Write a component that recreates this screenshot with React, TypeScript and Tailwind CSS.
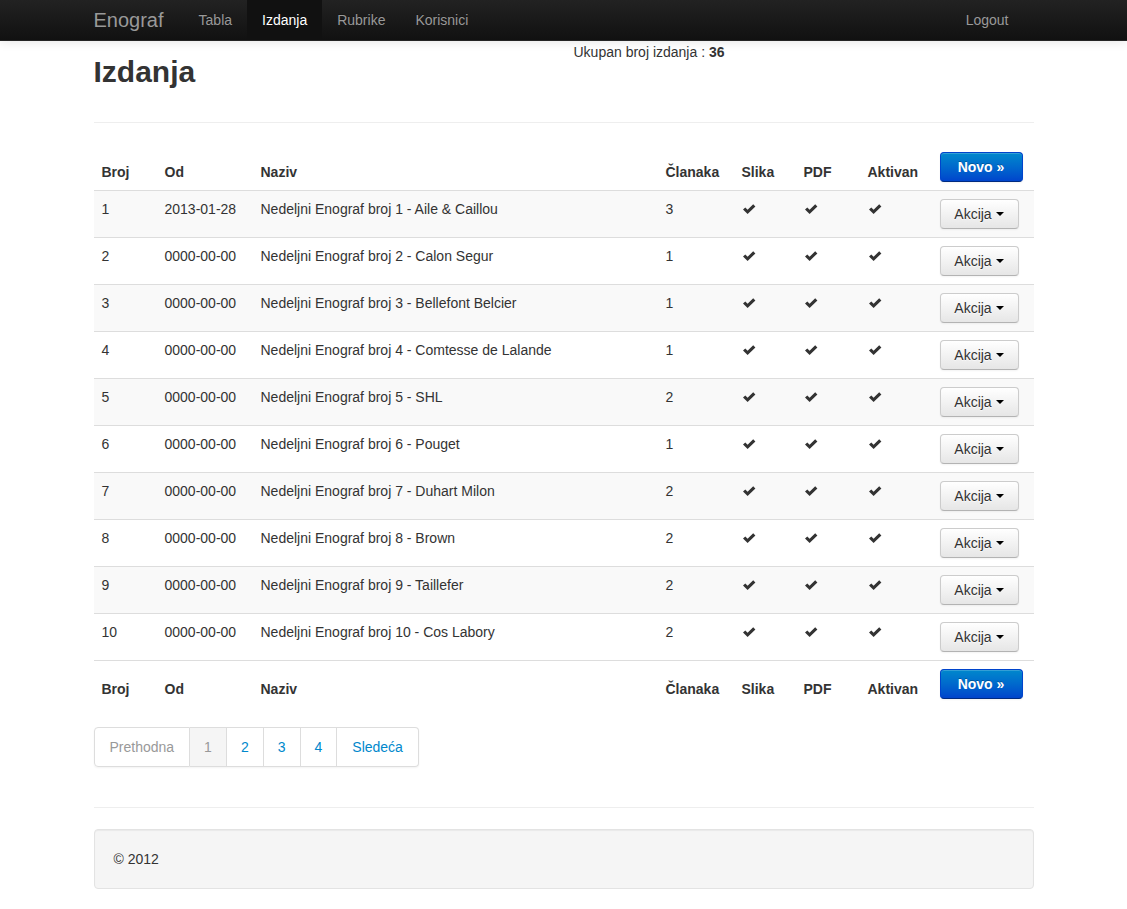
import React from "react";

type Izdanje = {
  broj: number;
  od: string;
  naziv: string;
  clanaka: number;
};

const izdanja: Izdanje[] = [
  { broj: 1, od: "2013-01-28", naziv: "Nedeljni Enograf broj 1 - Aile & Caillou", clanaka: 3 },
  { broj: 2, od: "0000-00-00", naziv: "Nedeljni Enograf broj 2 - Calon Segur", clanaka: 1 },
  { broj: 3, od: "0000-00-00", naziv: "Nedeljni Enograf broj 3 - Bellefont Belcier", clanaka: 1 },
  { broj: 4, od: "0000-00-00", naziv: "Nedeljni Enograf broj 4 - Comtesse de Lalande", clanaka: 1 },
  { broj: 5, od: "0000-00-00", naziv: "Nedeljni Enograf broj 5 - SHL", clanaka: 2 },
  { broj: 6, od: "0000-00-00", naziv: "Nedeljni Enograf broj 6 - Pouget", clanaka: 1 },
  { broj: 7, od: "0000-00-00", naziv: "Nedeljni Enograf broj 7 - Duhart Milon", clanaka: 2 },
  { broj: 8, od: "0000-00-00", naziv: "Nedeljni Enograf broj 8 - Brown", clanaka: 2 },
  { broj: 9, od: "0000-00-00", naziv: "Nedeljni Enograf broj 9 - Taillefer", clanaka: 2 },
  { broj: 10, od: "0000-00-00", naziv: "Nedeljni Enograf broj 10 - Cos Labory", clanaka: 2 },
];

const navItems = ["Tabla", "Izdanja", "Rubrike", "Korisnici"];

function IconOk() {
  return (
    <svg
      width="14"
      height="14"
      viewBox="0 0 14 14"
      className="mt-[3px] inline-block align-top"
      aria-hidden="true"
    >
      <polygon points="1,7.5 3.3,5.4 5.6,7.8 11.2,2.2 13.4,4.4 5.6,12.1" fill="#333" />
    </svg>
  );
}

function NovoButton() {
  return (
    <button
      type="button"
      className="h-[30px] w-[83px] rounded-[4px] border border-[#0044cc] border-b-[#002a80] bg-linear-to-b from-[#0088cc] to-[#0044cc] text-center text-[14px] leading-5 font-bold text-white shadow-[inset_0_1px_0_rgba(255,255,255,0.2),0_1px_2px_rgba(0,0,0,0.05)] [text-shadow:0_-1px_0_rgba(0,0,0,0.25)]"
    >
      Novo »
    </button>
  );
}

function AkcijaButton() {
  return (
    <button
      type="button"
      className="flex h-[30px] w-[79px] items-center justify-center rounded-[4px] border border-[#ccc] border-b-[#b3b3b3] bg-linear-to-b from-white to-[#e6e6e6] text-[14px] leading-5 text-[#333] shadow-[inset_0_1px_0_rgba(255,255,255,0.2),0_1px_2px_rgba(0,0,0,0.05)] [text-shadow:0_1px_1px_rgba(255,255,255,0.75)]"
    >
      Akcija
      <span className="ml-[4px] inline-block h-0 w-0 border-x-4 border-t-4 border-x-transparent border-t-black" />
    </button>
  );
}

function HeadRow({ foot = false }: { foot?: boolean }) {
  const th = `p-2 text-left align-bottom font-bold leading-5 ${foot ? "border-t border-[#ddd]" : ""}`;
  return (
    <tr>
      <th className={`${th} w-[63px]`}>Broj</th>
      <th className={`${th} w-[96px]`}>Od</th>
      <th className={`${th} w-[405px]`}>Naziv</th>
      <th className={`${th} w-[76px]`}>Članaka</th>
      <th className={`${th} w-[62px]`}>Slika</th>
      <th className={`${th} w-[64px]`}>PDF</th>
      <th className={`${th} w-[72px]`}>Aktivan</th>
      <th className={`${th} w-[102px]`}>
        <NovoButton />
      </th>
    </tr>
  );
}

export default function App() {
  return (
    <div className="min-h-screen bg-white font-['Liberation_Sans',Arial,sans-serif] text-[14px] leading-5 text-[#333]">
      <header className="h-[41px] border-b border-[#252525] bg-linear-to-b from-[#222] to-[#111] shadow-[0_1px_10px_rgba(0,0,0,0.1)]">
        <div className="mx-auto flex w-[940px] items-center">
          <a className="-ml-5 block px-5 py-[10px] text-[20px] leading-5 text-[#999]">Enograf</a>
          <ul className="flex">
            {navItems.map((item) => (
              <li key={item}>
                <a
                  className={`block px-[15px] py-[10px] leading-5 [text-shadow:0_-1px_0_rgba(0,0,0,0.25)] ${
                    item === "Izdanja" ? "bg-[#111] text-white" : "text-[#999]"
                  }`}
                >
                  {item}
                </a>
              </li>
            ))}
          </ul>
          <ul className="mr-[10px] ml-auto flex">
            <li>
              <a className="block px-[15px] py-[10px] leading-5 text-[#999]">Logout</a>
            </li>
          </ul>
        </div>
      </header>

      <main className="mx-auto w-[940px] pt-[1px]">
        <div className="flex gap-5 border-b border-[#eee] pb-5">
          <div className="w-[460px]">
            <h2 className="my-[10px] text-[30px] leading-10 font-bold">Izdanja</h2>
          </div>
          <div className="w-[460px]">
            Ukupan broj izdanja : <b>36</b>
          </div>
        </div>

        <table className="mt-[21px] mb-5 w-full table-fixed border-collapse">
          <thead>
            <HeadRow />
          </thead>
          <tbody>
            {izdanja.map((row, i) => (
              <tr key={row.broj} className={i % 2 === 0 ? "bg-[#f9f9f9]" : ""}>
                <td className="border-t border-[#ddd] p-2 align-top">{row.broj}</td>
                <td className="border-t border-[#ddd] p-2 align-top">{row.od}</td>
                <td className="border-t border-[#ddd] p-2 align-top">{row.naziv}</td>
                <td className="border-t border-[#ddd] p-2 align-top">{row.clanaka}</td>
                <td className="border-t border-[#ddd] p-2 align-top">
                  <IconOk />
                </td>
                <td className="border-t border-[#ddd] p-2 align-top">
                  <IconOk />
                </td>
                <td className="border-t border-[#ddd] p-2 align-top">
                  <IconOk />
                </td>
                <td className="border-t border-[#ddd] p-2 align-top">
                  <AkcijaButton />
                </td>
              </tr>
            ))}
          </tbody>
          <tfoot>
            <HeadRow foot />
          </tfoot>
        </table>

        <ul className="mb-5 inline-flex rounded-[4px] shadow-[0_1px_2px_rgba(0,0,0,0.05)]">
          <li>
            <span className="block rounded-l-[4px] border border-[#ddd] bg-white px-[15px] leading-[38px] text-[#999]">
              Prethodna
            </span>
          </li>
          <li>
            <span className="block border border-l-0 border-[#ddd] bg-[#f5f5f5] px-[14px] leading-[38px] text-[#999]">
              1
            </span>
          </li>
          {["2", "3", "4"].map((p) => (
            <li key={p}>
              <a className="block border border-l-0 border-[#ddd] bg-white px-[14px] leading-[38px] text-[#0088cc]">
                {p}
              </a>
            </li>
          ))}
          <li>
            <a className="block rounded-r-[4px] border border-l-0 border-[#ddd] bg-white px-[15px] leading-[38px] text-[#0088cc]">
              Sledeća
            </a>
          </li>
        </ul>

        <hr className="mt-5 mb-[21px] border-t border-[#eee]" />

        <footer className="mb-5 rounded-[4px] border border-[#e3e3e3] bg-[#f5f5f5] p-[19px] shadow-[inset_0_1px_1px_rgba(0,0,0,0.05)]">
          © 2012
        </footer>
      </main>
    </div>
  );
}
